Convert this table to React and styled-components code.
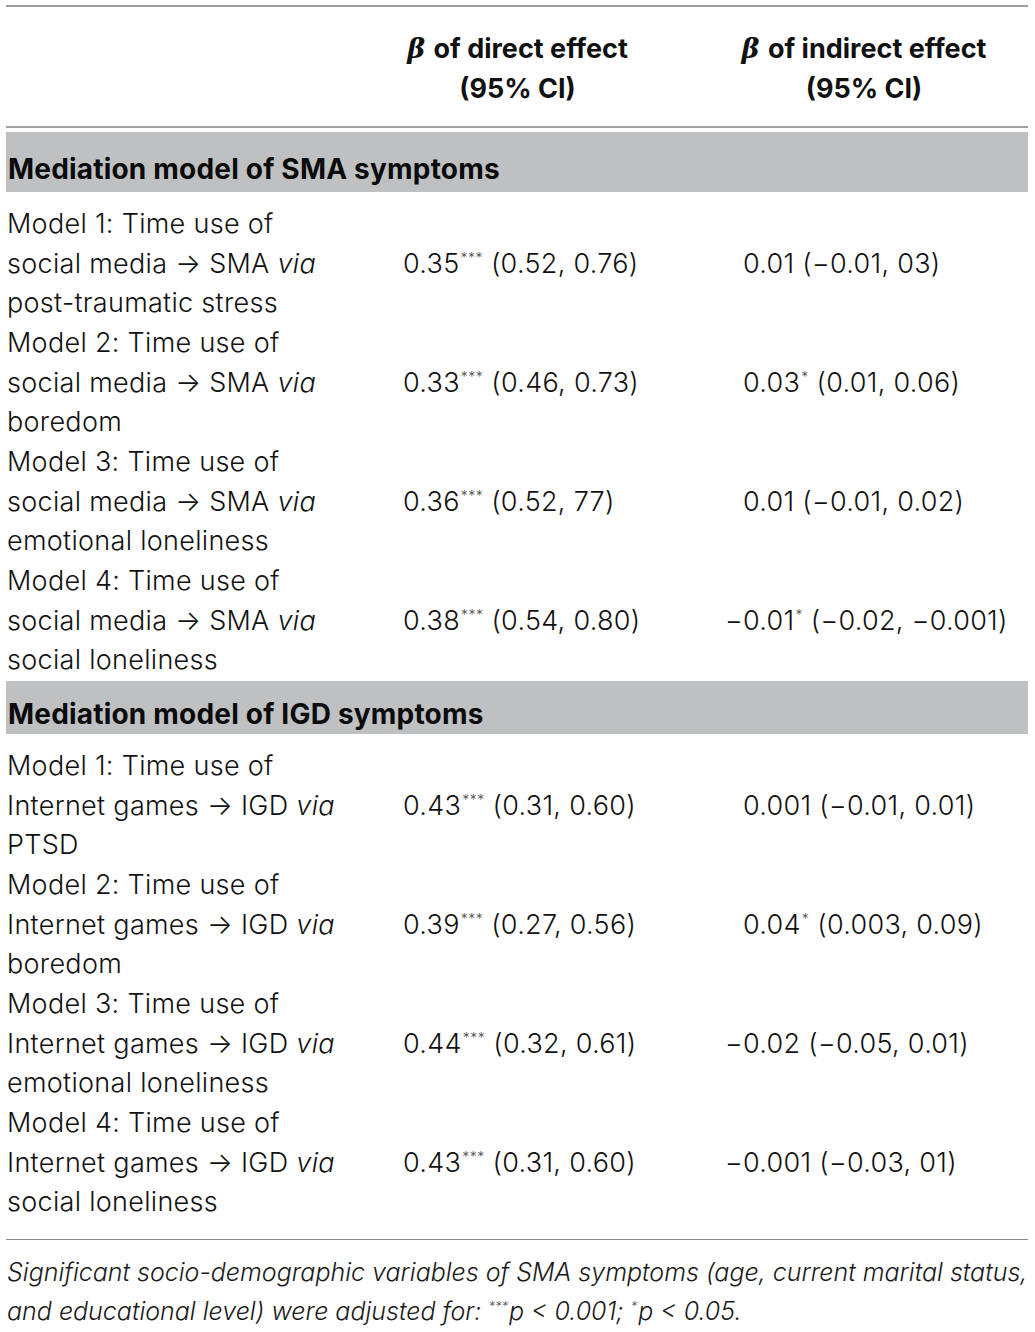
import styled, { createGlobalStyle } from "styled-components";

const GlobalStyle = createGlobalStyle`
  html, body {
    margin: 0;
    padding: 0;
    background: #fff;
  }
  body {
    font-family: Inter, "Liberation Sans", Arial, sans-serif;
    color: #111;
  }
`;

const Page = styled.div`
  padding: 5px 7px 0 6px;
`;

const Table = styled.div`
  width: 1022px;
  border-top: 2px solid #9d9d9d;
`;

const Row = styled.div`
  display: grid;
  grid-template-columns: 389px 305px 328px;
  align-items: center;
`;

const ModelRow = styled(Row)`
  height: 119px;
`;

const Head = styled(Row)`
  padding: 22px 0 17px;
  border-bottom: 2px solid #a3a3a3;
  align-items: start;
`;

const HeadCell = styled.div`
  font-size: 27px;
  font-weight: 700;
  line-height: 40px;
  text-align: center;
  padding-right: ${(p) => p.$trim || 0}px;
  color: #111;
`;

const Beta = styled.i`
  font-family: "DejaVu Serif", "Liberation Serif", serif;
  font-weight: 700;
  margin-right: 2px;
`;

const Band = styled.div`
  margin-top: ${(p) => p.$gap || 0}px;
  height: ${(p) => p.$h}px;
  box-sizing: border-box;
  padding: ${(p) => p.$pad}px 0 0 2px;
  background: #bfc0c2;
  font-size: 28px;
  font-weight: 700;
  line-height: 40px;
  letter-spacing: 0.2px;
  color: #0b0b0b;
`;

const Body = styled.div`
  padding: ${(p) => p.$top}px 0 ${(p) => p.$bottom}px;
`;

const Label = styled.div`
  padding-left: 1px;
  font-size: 27px;
  font-weight: 300;
  line-height: 39.67px;
  letter-spacing: 0.3px;
`;

const Value = styled.div`
  padding-left: ${(p) => p.$indent}px;
  font-size: 27px;
  font-weight: 300;
  line-height: 39.67px;
  letter-spacing: 0.3px;
  white-space: nowrap;
`;

const Sign = styled.span`
  display: inline-block;
  width: 20px;
  text-align: right;
`;

const Sup = styled.sup`
  font-size: 14px;
  line-height: 0;
  vertical-align: 10px;
  color: #555;
  letter-spacing: 0.5px;
  margin-left: 1px;
`;

const Foot = styled.div`
  border-top: 1px solid #8a8a8a;
  padding: 13px 0 0 1px;
  font-size: 25px;
  font-weight: 300;
  font-style: italic;
  line-height: 39px;
  color: #1a1a1a;
`;

const FootSup = styled.sup`
  font-size: 13px;
  line-height: 0;
  vertical-align: 9px;
  color: #555;
  margin-right: 1px;
`;

const sma = [
  { path: "social media", to: "SMA", med: "post-traumatic stress", d: "0.35", ds: "***", dci: "(0.52, 0.76)", i: "0.01", is: "", ici: "(−0.01, 03)" },
  { path: "social media", to: "SMA", med: "boredom", d: "0.33", ds: "***", dci: "(0.46, 0.73)", i: "0.03", is: "*", ici: "(0.01, 0.06)" },
  { path: "social media", to: "SMA", med: "emotional loneliness", d: "0.36", ds: "***", dci: "(0.52, 77)", i: "0.01", is: "", ici: "(−0.01, 0.02)" },
  { path: "social media", to: "SMA", med: "social loneliness", d: "0.38", ds: "***", dci: "(0.54, 0.80)", i: "−0.01", is: "*", ici: "(−0.02, −0.001)" },
];

const igd = [
  { path: "Internet games", to: "IGD", med: "PTSD", d: "0.43", ds: "***", dci: "(0.31, 0.60)", i: "0.001", is: "", ici: "(−0.01, 0.01)" },
  { path: "Internet games", to: "IGD", med: "boredom", d: "0.39", ds: "***", dci: "(0.27, 0.56)", i: "0.04", is: "*", ici: "(0.003, 0.09)" },
  { path: "Internet games", to: "IGD", med: "emotional loneliness", d: "0.44", ds: "***", dci: "(0.32, 0.61)", i: "−0.02", is: "", ici: "(−0.05, 0.01)" },
  { path: "Internet games", to: "IGD", med: "social loneliness", d: "0.43", ds: "***", dci: "(0.31, 0.60)", i: "−0.001", is: "", ici: "(−0.03, 01)" },
];

const Estimate = ({ value, star, ci, indent, signed }) => {
  const neg = value.startsWith("−");
  return (
    <Value $indent={indent}>
      {signed && <Sign>{neg ? "−" : ""}</Sign>}
      {neg ? value.slice(1) : value}
      {star && <Sup>{star}</Sup>} {ci}
    </Value>
  );
};

const ModelRows = ({ rows }) =>
  rows.map((r, n) => (
    <ModelRow key={n}>
      <Label>
        Model {n + 1}: Time use of
        <br />
        {r.path} → {r.to} <i>via</i>
        <br />
        {r.med}
      </Label>
      <Estimate value={r.d} star={r.ds} ci={r.dci} indent={8} />
      <Estimate value={r.i} star={r.is} ci={r.ici} indent={23} signed />
    </ModelRow>
  ));

const App = () => (
  <Page>
    <GlobalStyle />
    <Table>
      <Head>
        <div />
        <HeadCell $trim={60}>
          <Beta>β</Beta> of direct effect
          <br />
          (95% CI)
        </HeadCell>
        <HeadCell>
          <Beta>β</Beta> of indirect effect
          <br />
          (95% CI)
        </HeadCell>
      </Head>
      <Band $gap={4} $h={60} $pad={17}>Mediation model of SMA symptoms</Band>
      <Body $top={12} $bottom={1}>
        <ModelRows rows={sma} />
      </Body>
      <Band $h={53} $pad={13}>Mediation model of IGD symptoms</Band>
      <Body $top={12} $bottom={17}>
        <ModelRows rows={igd} />
      </Body>
      <Foot>
        Significant socio-demographic variables of SMA symptoms (age, current marital status,
        <br />
        and educational level) were adjusted for: <FootSup>***</FootSup>p &lt; 0.001; <FootSup>*</FootSup>p &lt; 0.05.
      </Foot>
    </Table>
  </Page>
);

export default App;
